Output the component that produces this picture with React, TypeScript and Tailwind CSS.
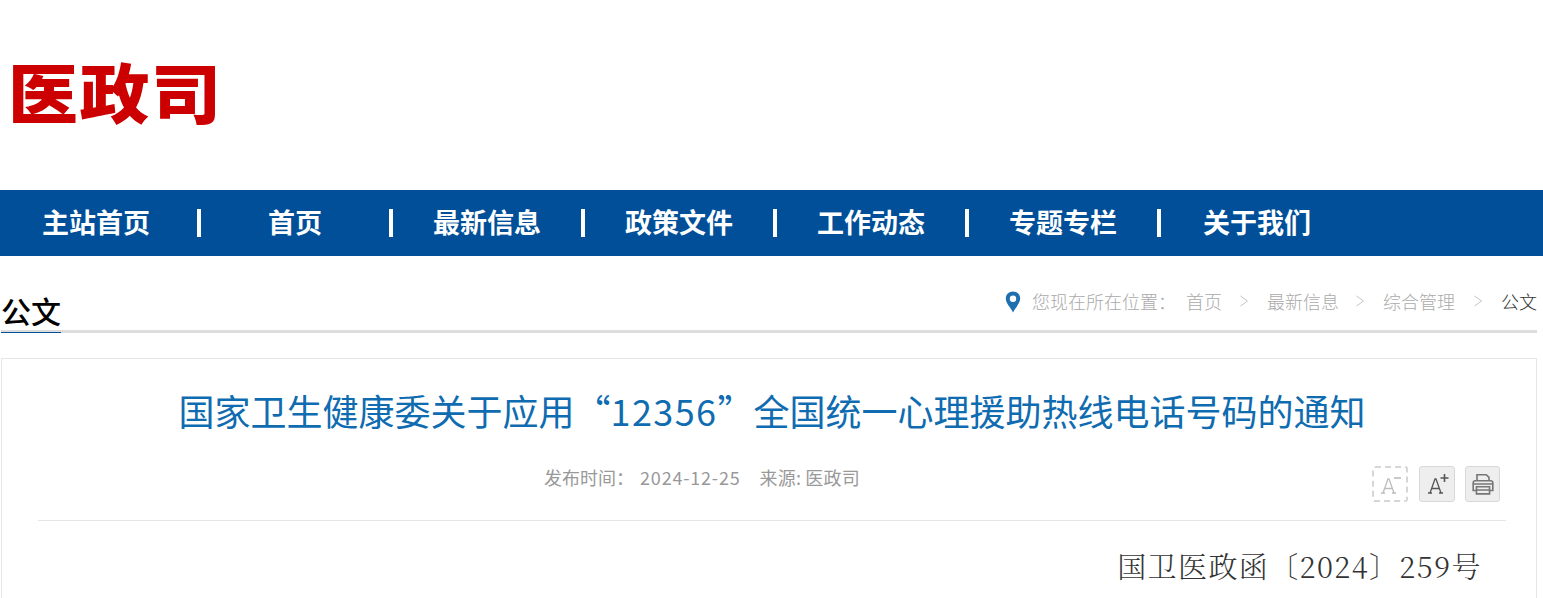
const cjk = '[font-family:"Noto_Sans_CJK_SC","Noto_Sans",sans-serif]';

const navItems = ['主站首页', '首页', '最新信息', '政策文件', '工作动态', '专题专栏', '关于我们'];
const crumbs = ['首页', '最新信息', '综合管理'];

function Pin() {
  return (
    <svg width="16" height="22" viewBox="0 0 16 22" className="mr-[11px] mt-[2px] shrink-0">
      <path
        fillRule="evenodd"
        d="M8 0.5C3.8 0.5 0.8 3.6 0.8 7.6C0.8 12.4 5.6 16.6 8 21.5C10.4 16.6 15.2 12.4 15.2 7.6C15.2 3.6 12.2 0.5 8 0.5ZM8 4.6A3.2 3.2 0 1 1 8 11A3.2 3.2 0 1 1 8 4.6Z"
        fill="#1f6fae"
      />
    </svg>
  );
}

function Chevron() {
  return (
    <svg width="10" height="12" viewBox="0 0 10 12" className="mx-[18px] shrink-0">
      <path d="M1.5 1L8.5 6L1.5 11" fill="none" stroke="#c4c4c4" strokeWidth="1" />
    </svg>
  );
}

function FontButton({ sign, disabled }: { sign: string; disabled?: boolean }) {
  const color = disabled ? '#bdbdbd' : '#555555';
  return (
    <div
      className={
        disabled
          ? 'flex h-[36px] w-[36px] items-center justify-center rounded-[3px] border-2 border-dashed border-[#d6d6d6] bg-white'
          : 'flex h-[36px] w-[36px] items-center justify-center rounded-[3px] border border-[#d8d8d8] bg-[#eeeeee]'
      }
    >
      <svg width="26" height="24" viewBox="0 0 26 24">
        <path d="M6 21L11 7H12L17 21M7.5 16.5H15.5M4 21H8M15 21H19" fill="none" stroke={color} strokeWidth="1.3" />
        {sign === '-' ? (
          <path d="M17 6H24" stroke={color} strokeWidth="1.6" />
        ) : (
          <path d="M16.5 6H24.5M20.5 2V10" stroke={color} strokeWidth="1.6" />
        )}
      </svg>
    </div>
  );
}

function PrintButton() {
  return (
    <div className="-ml-px flex h-[36px] w-[35px] items-center justify-center rounded-[3px] border border-[#d8d8d8] bg-[#eeeeee]">
      <svg width="24" height="24" viewBox="0 0 22 22" fill="none" stroke="#777777" strokeWidth="1.5">
        <path d="M5.5 8V2.5H14L16.5 5V8" />
        <path d="M5 17H2V10C2 8.8 2.8 8 4 8H18C19.2 8 20 8.8 20 10V17H17" />
        <path d="M5 13.5H17V20H5Z" />
        <path d="M2 11H20M5 16.5H17" />
      </svg>
    </div>
  );
}

export default function App() {
  return (
    <div className={`h-[598px] overflow-hidden bg-white ${cjk}`}>
      <header className="flex h-[190px] items-start pl-[8px] pt-[48px]">
        <div className="origin-center scale-y-[0.93] text-[70px] font-black leading-[84px] tracking-[1.5px] text-[#cc0000]">医政司</div>
      </header>

      <nav className="flex h-[66px] items-center bg-[#004f98]">
        {navItems.map((item, i) => (
          <div key={item} className={i === 0 ? 'flex w-[201px] items-center' : 'flex w-[192px] items-center'}>
            <a
              className={
                i === 0
                  ? 'flex-1 pb-[2px] pr-[5px] text-center text-[27px] font-bold text-white'
                  : 'flex-1 pb-[2px] text-center text-[27px] font-bold text-white'
              }
            >
              {item}
            </a>
            {i < navItems.length - 1 && <span className="h-[28px] w-[4px] shrink-0 bg-white" />}
          </div>
        ))}
      </nav>

      <section className="mx-px mt-[33px] mr-[6px] flex h-[44px] items-start justify-between border-b-[3px] border-[#dddddd]">
        <h1 className="h-[44px] border-b-[1px] border-[#004f98] text-[30px] font-medium leading-[43px] text-black">公文</h1>
        <div className="flex h-[24px] items-center text-[18px] font-light text-[#aaaaaa]">
          <Pin />
          <span>您现在所在位置：</span>
          <span className="ml-[10px] -mr-px">{crumbs[0]}</span>
          <Chevron />
          <span className="-mr-[2px]">{crumbs[1]}</span>
          <Chevron />
          <span>{crumbs[2]}</span>
          <Chevron />
          <span className="text-[#333333]">公文</span>
        </div>
      </section>

      <main className="mx-px mr-[6px] mt-[25px] h-[300px] border border-[#e6e6e6] pl-[36px] pr-[30px]">
        <h2 className="pt-[24px] text-center text-[36px] font-normal leading-[54px] text-[#0f6cb0]">
          国家卫生健康委关于应用“<span className="tracking-[1.4px]">12356</span>”全国统一心理援助热线电话号码的通知
        </h2>
        <div className="relative mt-[28px] flex h-[44px] justify-center pr-[140px] text-[18px] leading-[24px] text-[#999999]">
          <span>发布时间：</span>
          <span className="ml-[6px] tracking-[0.8px]">2024-12-25</span>
          <span className="ml-[19px] tracking-[0.2px]">来源: 医政司</span>
          <div className="absolute right-[6px] top-[1px] flex gap-[11px]">
            <FontButton sign="-" disabled />
            <FontButton sign="+" />
            <PrintButton />
          </div>
        </div>
        <div className="mt-[11px] border-t border-[#e6e6e6] pr-[24px] pt-[27px] text-right font-['Noto_Serif_CJK_SC','Liberation_Serif',serif] text-[29px] font-light leading-[36px] tracking-[1.4px] text-[#333333]">
          国卫医政函〔2024〕259号
        </div>
      </main>
    </div>
  );
}
